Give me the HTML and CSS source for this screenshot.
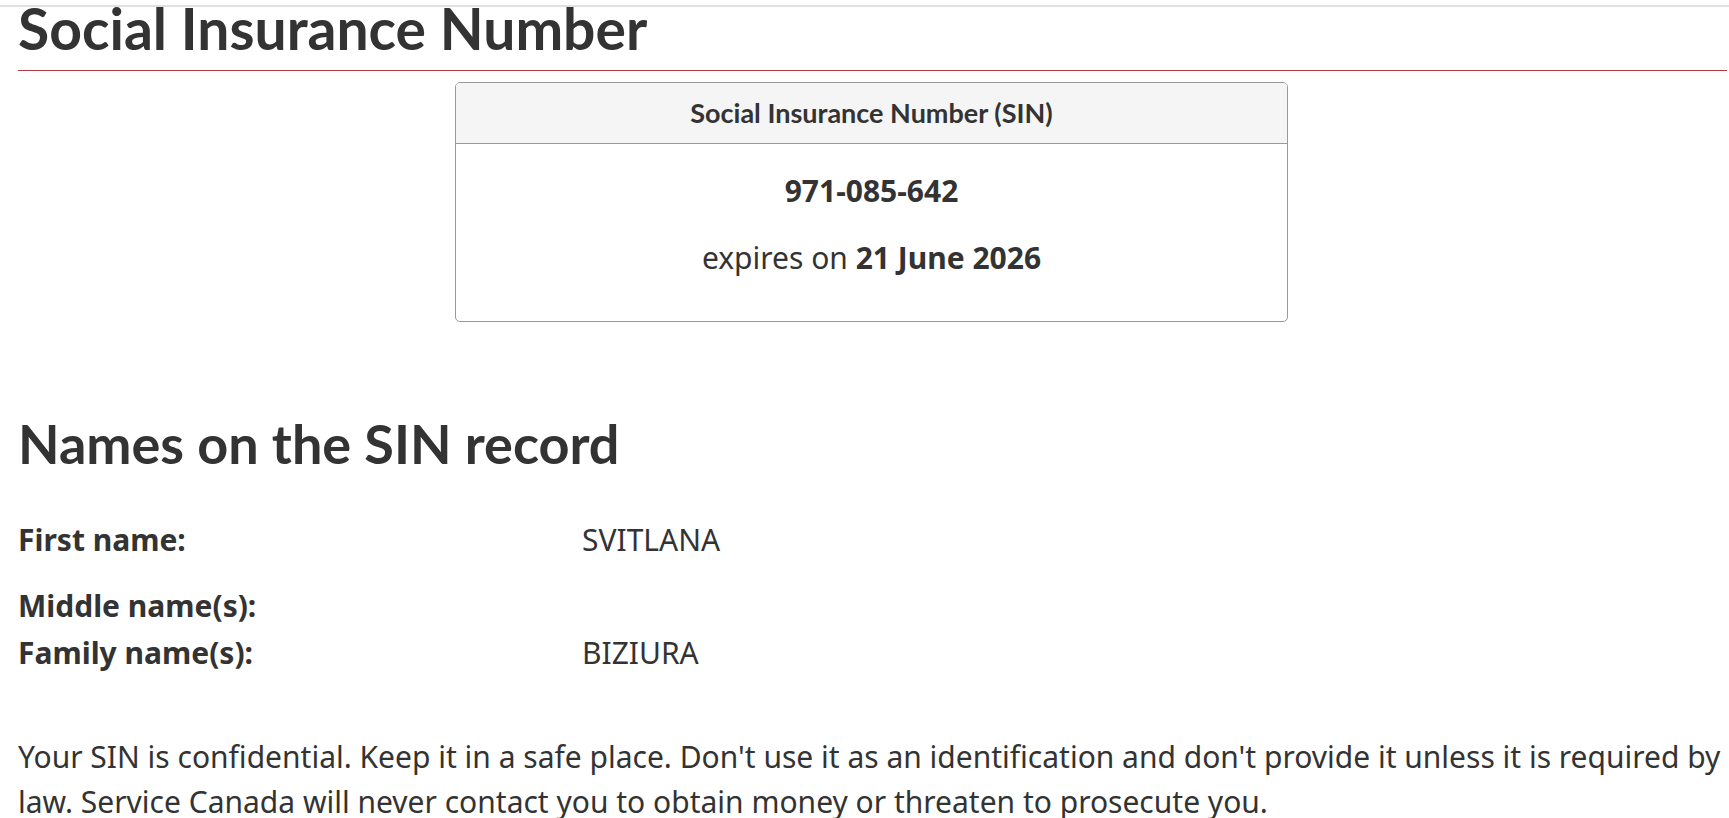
FILE: index.html
```html
<!DOCTYPE html>
<html lang="en">
<head>
<meta charset="utf-8">
<title>Social Insurance Number</title>
<link rel="stylesheet" href="styles.css">
</head>
<body>
<div class="topline"></div>
<main class="page">
  <h1 class="title">Social Insurance Number</h1>
  <section class="panel">
    <div class="panel-head"><h2 class="panel-title">Social Insurance Number (SIN)</h2></div>
    <div class="panel-body">
      <p class="sin">971-085-642</p>
      <p class="exp">expires on <strong>21 June 2026</strong></p>
    </div>
  </section>
  <h2 class="section-title">Names on the SIN record</h2>
  <dl class="names">
    <div class="row first"><dt>First name:</dt><dd>SVITLANA</dd></div>
    <div class="row middle"><dt>Middle name(s):</dt><dd></dd></div>
    <div class="row"><dt>Family name(s):</dt><dd>BIZIURA</dd></div>
  </dl>
  <p class="note">Your SIN is confidential. Keep it in a safe place. Don't use it as an identification and don't provide it unless it is required by law. Service Canada will never contact you to obtain money or threaten to prosecute you.</p>
</main>
</body>
</html>
```

FILE: styles.css
```css
html, body {
  margin: 0;
  padding: 0;
  background: #fff;
}
body {
  font-family: "Noto Sans", "Open Sans", sans-serif;
  font-size: 30px;
  line-height: 45px;
  color: #333;
  overflow: hidden;
}
.topline {
  position: fixed;
  top: 5px;
  left: 0;
  right: 0;
  height: 2px;
  background: #e0e0e0;
  z-index: 2;
}
.page {
  padding: 0 2px 0 18px;
}
.title {
  font-family: Lato, "Noto Sans", sans-serif;
  font-weight: 700;
  font-size: 57px;
  line-height: 56px;
  margin: 0;
  padding-bottom: 14px;
  border-bottom: 1px solid #af3c43;
  color: #333;
}
.panel {
  width: 831px;
  margin: 11px 0 0 437px;
  border: 1px solid #999;
  border-radius: 5px;
  overflow: hidden;
}
.panel-head {
  background: #f5f5f5;
  border-bottom: 1px solid #999;
  height: 60px;
  display: flex;
  align-items: center;
  justify-content: center;
}
.panel-title {
  margin: 0;
  font-family: Lato, "Noto Sans", sans-serif;
  font-weight: 700;
  font-size: 27px;
  line-height: 30px;
  color: #333;
}
.panel-body {
  padding: 24px 20px 19px;
  text-align: center;
}
.panel-body p {
  margin: 0 0 22px;
}
.sin {
  font-weight: 700;
}
.exp strong {
  font-weight: 700;
}
.section-title {
  font-family: Lato, "Noto Sans", sans-serif;
  font-weight: 700;
  font-size: 54px;
  line-height: 60px;
  margin: 92px 0 0;
  color: #333;
}
.names {
  margin: 43px 0 0;
}
.row {
  display: grid;
  grid-template-columns: 564px 1fr;
}
.row.first {
  margin-bottom: 21px;
}
.row.middle {
  margin-bottom: 2px;
}
.names dt {
  font-weight: 700;
}
.names dd {
  margin: 0;
}
.note {
  margin: 59px 0 0;
}
```
